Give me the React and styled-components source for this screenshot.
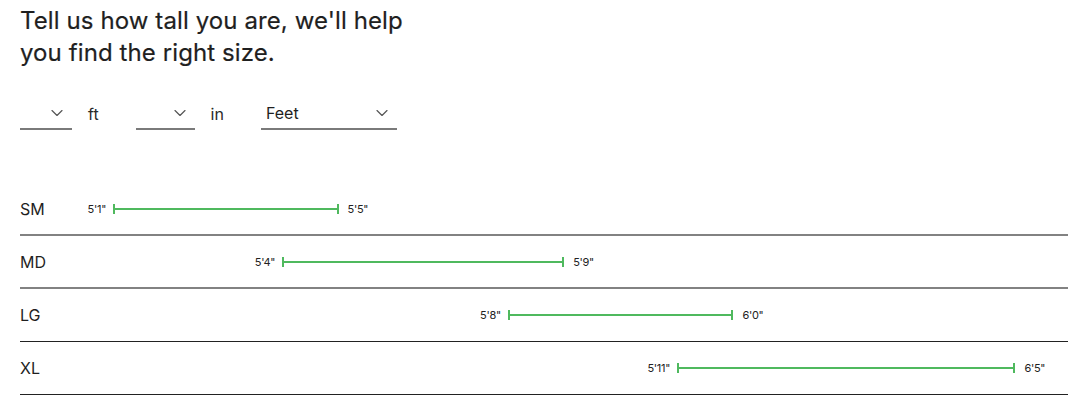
import React from 'react';
import styled, { createGlobalStyle } from 'styled-components';
import { ChevronDown } from 'lucide-react';

const GlobalStyle = createGlobalStyle`
  html, body {
    margin: 0;
    padding: 0;
    background: #ffffff;
  }
  body {
    font-family: Inter, "Noto Sans", "Liberation Sans", sans-serif;
    color: #222222;
  }
`;

const Page = styled.div`
  padding: 5px 12px 0 20px;
`;

const Heading = styled.h2`
  margin: 0;
  max-width: 412px;
  font-size: 24px;
  font-weight: 400;
  line-height: 32px;
  letter-spacing: 0.1px;
  color: #1f1f1f;
  -webkit-text-stroke: 0.2px #1f1f1f;
`;

const Controls = styled.div`
  display: flex;
  align-items: flex-end;
  margin-top: 29px;
`;

const SelectWrap = styled.div`
  position: relative;
  width: ${(p) => p.$width}px;
  height: 32px;
  box-sizing: border-box;
  border-bottom: 2px solid #7a7a7a;

  svg {
    position: absolute;
    right: 5px;
    top: 5px;
    color: #555;
    pointer-events: none;
  }
`;

const Select = styled.select`
  appearance: none;
  -webkit-appearance: none;
  width: 100%;
  height: 100%;
  border: none;
  outline: none;
  background: transparent;
  padding: 0 0 0 5px;
  font-family: inherit;
  font-size: 16px;
  color: #1f1f1f;
`;

const Unit = styled.span`
  font-size: 16px;
  line-height: 32px;
  margin: 0 37px 0 16px;
  color: #2a2a2a;
`;

const Rows = styled.div`
  margin-top: 53px;
`;

const Row = styled.div`
  display: grid;
  grid-template-columns: 56px 1fr;
  align-items: center;
  height: 53px;
  box-sizing: border-box;
  border-bottom: ${(p) => (p.$soft ? '2px solid #828282' : '1px solid #222222')};
`;

const SizeLabel = styled.span`
  font-size: 16px;
  color: #1f1f1f;
`;

const Track = styled.div`
  height: 12px;
  display: flex;
  align-items: center;
`;

const Bar = styled.div`
  position: relative;
  height: 2px;
  background: #4fb95e;

  &::before,
  &::after {
    content: '';
    position: absolute;
    top: -4px;
    width: 2px;
    height: 10px;
    background: #4fb95e;
  }
  &::before {
    left: 0;
  }
  &::after {
    right: 0;
  }
`;

const RangeLabel = styled.span`
  position: absolute;
  top: 50%;
  transform: translateY(-50%);
  font-size: 11px;
  letter-spacing: -0.3px;
  color: #222;
  white-space: nowrap;
  ${(p) => (p.$side === 'low' ? 'right: calc(100% + 7px);' : 'left: calc(100% + 9px);')}
`;

const PX_PER_INCH = 56.4;
const ORIGIN = 37;
const BASE = 61;

const sizes = [
  { name: 'SM', min: 61, max: 65, low: "5'1\"", high: "5'5\"" },
  { name: 'MD', min: 64, max: 69, low: "5'4\"", high: "5'9\"" },
  { name: 'LG', min: 68, max: 72, low: "5'8\"", high: "6'0\"" },
  { name: 'XL', min: 71, max: 77, low: "5'11\"", high: "6'5\"" },
];

const Dropdown = ({ width, value, options }) => (
  <SelectWrap $width={width}>
    <Select defaultValue={value}>
      {options.map((o) => (
        <option key={o} value={o}>{o}</option>
      ))}
    </Select>
    <ChevronDown size={20} strokeWidth={1.4} />
  </SelectWrap>
);

export default function App() {
  return (
    <Page>
      <GlobalStyle />
      <Heading>Tell us how tall you are, we'll help you find the right size.</Heading>

      <Controls>
        <Dropdown width={52} value="" options={['', '4', '5', '6', '7']} />
        <Unit>ft</Unit>
        <Dropdown width={59} value="" options={['', '0', '1', '2', '3', '4', '5', '6', '7', '8', '9', '10', '11']} />
        <Unit>in</Unit>
        <Dropdown width={136} value="Feet" options={['Feet', 'Centimeters']} />
      </Controls>

      <Rows>
        {sizes.map((s, i) => {
          const left = ORIGIN + (s.min - BASE) * PX_PER_INCH;
          const width = (s.max - s.min) * PX_PER_INCH;
          return (
            <Row key={s.name} $soft={i < 2}>
              <SizeLabel>{s.name}</SizeLabel>
              <Track>
                <Bar style={{ marginLeft: left, width }}>
                  <RangeLabel $side="low">{s.low}</RangeLabel>
                  <RangeLabel $side="high">{s.high}</RangeLabel>
                </Bar>
              </Track>
            </Row>
          );
        })}
      </Rows>
    </Page>
  );
}
